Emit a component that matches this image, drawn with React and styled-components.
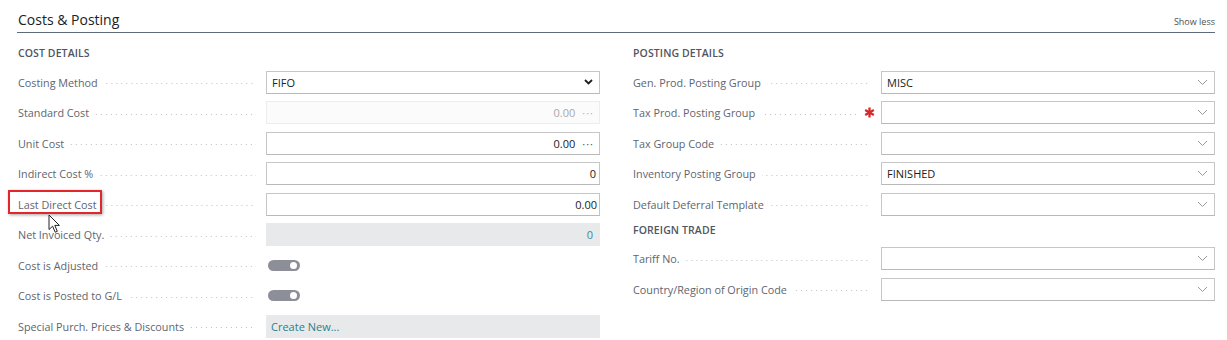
import React from "react";
import styled, { createGlobalStyle, css } from "styled-components";

const Global = createGlobalStyle`
  html, body { margin: 0; padding: 0; background: #fff; }
  body { font-family: "Open Sans", "Noto Sans", sans-serif; }
  * { box-sizing: border-box; }
`;

const Page = styled.div`
  position: relative;
  width: 1227px;
  height: 340px;
  padding: 0 12px 0 17px;
  overflow: hidden;
`;

const Header = styled.div`
  height: 33px;
  display: flex;
  align-items: flex-end;
  justify-content: space-between;
  border-bottom: 1px solid #5f6a79;
`;

const Title = styled.div`
  font-size: 14px;
  line-height: 20px;
  color: #212121;
  padding: 0 0 2px 1px;
`;

const ShowLess = styled.div`
  font-size: 9px;
  line-height: 12px;
  color: #505050;
  padding-bottom: 4px;
`;

const Columns = styled.div`
  display: grid;
  grid-template-columns: 583px 583px;
  column-gap: 32px;
`;

const Column = styled.div`
  display: flex;
  flex-direction: column;
`;

const Heading = styled.div`
  height: 24px;
  padding: 0 0 4px 1px;
  margin-top: ${(p) => (p.$first ? "10px" : "0")};
  display: flex;
  align-items: center;
  font-size: 10.5px;
  font-weight: 600;
  letter-spacing: 0.1px;
  color: #505560;
`;

const Row = styled.div`
  height: 30.5px;
  display: grid;
  grid-template-columns: 249px 1fr;
  align-items: center;
`;

const LabelCell = styled.div`
  display: flex;
  align-items: center;
  min-width: 0;
`;

const LabelText = styled.span`
  font-size: 10.8px;
  color: #5e6570;
  white-space: nowrap;
  padding-left: 1px;
`;

const Leader = styled.span`
  flex: 1;
  height: 1px;
  margin: 3px ${(p) => (p.$short ? "4px" : "10px")} 0 6px;
  background-image: linear-gradient(to right, #bcc0c6 1px, transparent 1px);
  background-size: 5px 1px;
  background-repeat: repeat-x;
  background-position: right center;
`;

const Star = styled.svg`
  width: 11px;
  height: 11px;
  margin-right: 6px;
  flex: none;
`;

const Box = styled.div`
  height: 23px;
  display: flex;
  align-items: center;
  padding: 0 5px 0 5px;
  font-size: 11px;
  color: #212121;
  background: #fff;
  border: 1px solid #c6c6c6;
  border-bottom-color: #b9b9b9;
  justify-content: ${(p) => (p.$right ? "flex-end" : "space-between")};
  ${(p) =>
    p.$disabled &&
    css`
      background: #fbfbfb;
      border-color: #ededed;
      color: #a9a9a9;
    `}
  ${(p) =>
    p.$grey &&
    css`
      background: #e8e9ea;
      border-color: #e8e9ea;
      color: #3c8c9c;
    `}
`;

const Dots = styled.span`
  margin-left: 7px;
  letter-spacing: 1px;
  color: ${(p) => (p.$muted ? "#b5b5b5" : "#555")};
`;

const ToggleTrack = styled.div`
  width: 32px;
  height: 11px;
  margin-left: 2px;
  border-radius: 6px;
  background: #8c8f98;
  position: relative;
`;

const ToggleKnob = styled.span`
  position: absolute;
  right: 3px;
  top: 2px;
  width: 7px;
  height: 7px;
  border-radius: 50%;
  background: #fff;
`;

const Link = styled.span`
  color: #2a7f8e;
  font-size: 11px;
`;

const Chevron = ({ bold }) =>
  bold ? (
    <svg width="9" height="6" viewBox="0 0 9 6" style={{ marginRight: 1 }}>
      <path d="M1 1 L4.5 4.5 L8 1" fill="none" stroke="#1f1f1f" strokeWidth="1.8" />
    </svg>
  ) : (
    <svg width="11" height="7" viewBox="0 0 11 7" style={{ marginRight: 1 }}>
      <path d="M1 1 L5.5 5.5 L10 1" fill="none" stroke="#9a9a9a" strokeWidth="1" />
    </svg>
  );

const Annotation = styled.div`
  position: absolute;
  left: 8px;
  top: 190px;
  width: 94px;
  height: 24px;
  border: 2px solid #e3262b;
  box-shadow: 1px 1px 3px rgba(0, 0, 0, 0.35);
`;

const Cursor = styled.svg`
  position: absolute;
  left: 48px;
  top: 214px;
`;

const Field = ({ label, required, children }) => (
  <Row>
    <LabelCell>
      <LabelText>{label}</LabelText>
      <Leader $short={required} />
      {required && (
        <Star viewBox="0 0 11 11">
          <g stroke="#d9262c" strokeWidth="2.3" strokeLinecap="butt">
            <line x1="5.5" y1="0.5" x2="5.5" y2="10.5" />
            <line x1="1.2" y1="3" x2="9.8" y2="8" />
            <line x1="1.2" y1="8" x2="9.8" y2="3" />
          </g>
        </Star>
      )}
    </LabelCell>
    {children}
  </Row>
);

const Lookup = ({ value }) => (
  <Box>
    <span>{value}</span>
    <Chevron />
  </Box>
);

export default function App() {
  return (
    <>
      <Global />
      <Page>
        <Header>
          <Title>Costs &amp; Posting</Title>
          <ShowLess>Show less</ShowLess>
        </Header>
        <Columns>
          <Column>
            <Heading $first>COST DETAILS</Heading>
            <Field label="Costing Method">
              <Box>
                <span>FIFO</span>
                <Chevron bold />
              </Box>
            </Field>
            <Field label="Standard Cost">
              <Box $right $disabled>
                <span>0.00</span>
                <Dots $muted>···</Dots>
              </Box>
            </Field>
            <Field label="Unit Cost">
              <Box $right>
                <span>0.00</span>
                <Dots>···</Dots>
              </Box>
            </Field>
            <Field label="Indirect Cost %">
              <Box $right style={{ paddingRight: 3 }}>
                <span>0</span>
              </Box>
            </Field>
            <Field label="Last Direct Cost">
              <Box $right style={{ paddingRight: 2 }}>
                <span>0.00</span>
              </Box>
            </Field>
            <Field label="Net Invoiced Qty.">
              <Box $right $grey style={{ paddingRight: 6 }}>
                <span>0</span>
              </Box>
            </Field>
            <Field label="Cost is Adjusted">
              <div>
                <ToggleTrack>
                  <ToggleKnob />
                </ToggleTrack>
              </div>
            </Field>
            <Field label="Cost is Posted to G/L">
              <div>
                <ToggleTrack>
                  <ToggleKnob />
                </ToggleTrack>
              </div>
            </Field>
            <Field label="Special Purch. Prices & Discounts">
              <Box $grey style={{ paddingLeft: 4 }}>
                <Link>Create New...</Link>
              </Box>
            </Field>
          </Column>
          <Column>
            <Heading $first>POSTING DETAILS</Heading>
            <Field label="Gen. Prod. Posting Group">
              <Lookup value="MISC" />
            </Field>
            <Field label="Tax Prod. Posting Group" required>
              <Lookup value="" />
            </Field>
            <Field label="Tax Group Code">
              <Lookup value="" />
            </Field>
            <Field label="Inventory Posting Group">
              <Lookup value="FINISHED" />
            </Field>
            <Field label="Default Deferral Template">
              <Lookup value="" />
            </Field>
            <Heading>FOREIGN TRADE</Heading>
            <Field label="Tariff No.">
              <Lookup value="" />
            </Field>
            <Field label="Country/Region of Origin Code">
              <Lookup value="" />
            </Field>
          </Column>
        </Columns>
        <Annotation />
        <Cursor width="13" height="20" viewBox="0 0 13 20">
          <path
            d="M1 1 L1 15.5 L4.6 12.2 L7.2 18.2 L9.3 17.3 L6.8 11.4 L11.4 11.4 Z"
            fill="#fff"
            stroke="#222"
            strokeWidth="1"
            strokeLinejoin="round"
          />
        </Cursor>
      </Page>
    </>
  );
}
